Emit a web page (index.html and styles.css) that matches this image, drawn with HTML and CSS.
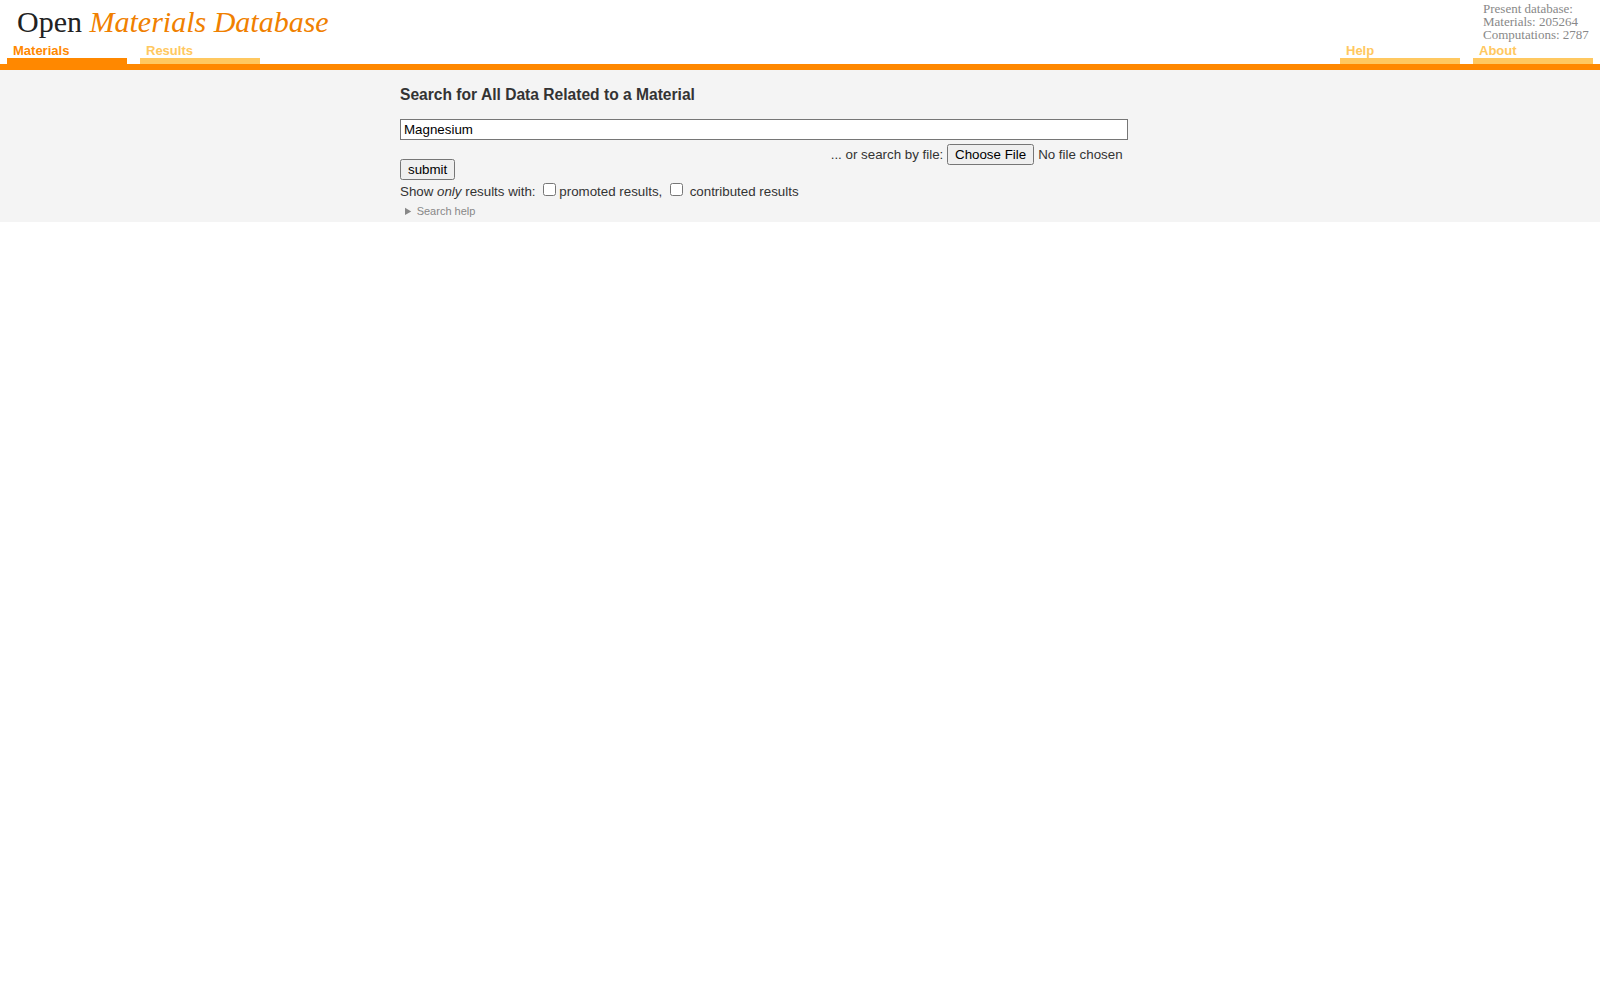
FILE: index.html
```html
<!DOCTYPE html>
<html lang="en">
<head>
  <meta charset="UTF-8">
  <title>Open Materials Database - Materials</title>
  <link rel="stylesheet" href="styles.css">
</head>
<body>

<header>
  <div class="top">
    <h1>Open <em>Materials Database</em></h1>
    <div class="stats">
      Present database:<br>
      Materials: 205264<br>
      Computations: 2787
    </div>
  </div>
  <nav class="tabs">
    <a class="tab active" href="#">Materials</a>
    <a class="tab" href="#">Results</a>
    <span class="spacer"></span>
    <a class="tab" href="#">Help</a>
    <a class="tab" href="#">About</a>
  </nav>
</header>

<div class="content">
  <div class="search">
    <h2>Search for All Data Related to a Material</h2>
    <form>
      <input class="query" type="text" value="Magnesium">
      <div class="byfile">... or search by file: <input type="file"></div>
      <button type="button">submit</button>
      <div class="filters">
        Show <em>only</em> results with: <input type="checkbox">promoted results, <input type="checkbox"> contributed results
      </div>
      <details>
        <summary>Search help</summary>
      </details>
    </form>
  </div>
</div>

</body>
</html>
```

FILE: styles.css
```css
body {
  margin: 0;
  padding: 0;
  font-family: "Liberation Sans", Arial, sans-serif;
  color: #333;
  background: #fff;
}

header {
  border-bottom: 6px solid #ff8800;
}

.top {
  display: flex;
  justify-content: space-between;
  align-items: flex-start;
  height: 43px;
}

h1 {
  margin: 0;
  padding: 5px 0 0 17px;
  font-family: "Liberation Serif", "Times New Roman", serif;
  font-weight: normal;
  font-size: 30px;
  line-height: 34px;
  color: #222;
}

h1 em {
  color: #f08000;
}

.stats {
  font-family: "Liberation Serif", "Times New Roman", serif;
  font-size: 13px;
  line-height: 13px;
  color: #888;
  width: 117px;
  padding-top: 2px;
}

.tabs {
  display: flex;
  gap: 13px;
  padding: 0 7px;
}

.spacer {
  flex: 1;
}

.tab {
  display: block;
  width: 114px;
  padding: 0 0 0 6px;
  font-weight: bold;
  font-size: 13px;
  line-height: 15px;
  color: #ffc860;
  text-decoration: none;
  border-bottom: 6px solid #ffc860;
}

.tab.active {
  color: #ff8800;
  border-bottom-color: #ff8800;
}

.content {
  background: #f4f4f4;
  padding: 0 0 5px;
}

.search {
  width: 800px;
  margin: 0 auto;
  font-size: 13.33px;
}

h2 {
  margin: 0;
  padding: 16px 0 15px;
  font-size: 15.6px;
  line-height: 18px;
  color: #333;
}

.query {
  display: block;
  box-sizing: border-box;
  width: 728px;
  height: 21px;
  margin: 0;
  padding: 1px 3px;
  border: 1px solid #767676;
  font-family: "Liberation Sans", Arial, sans-serif;
  font-size: 13.33px;
  color: #000;
}

.byfile {
  width: 728px;
  height: 15px;
  margin-top: 4px;
  text-align: right;
}

.byfile input {
  width: 181px;
  margin: 0;
  font-family: "Liberation Sans", Arial, sans-serif;
  font-size: 13.33px;
}

button {
  margin: 0;
  font-family: "Liberation Sans", Arial, sans-serif;
  font-size: 13.33px;
}

details {
  margin-top: 6px;
  padding-left: 5px;
  font-size: 11px;
  color: #888;
}
```
